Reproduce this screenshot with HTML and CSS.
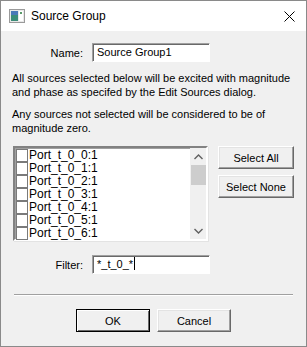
FILE: index.html
```html
<!DOCTYPE html>
<html>
<head>
    <title>Source Group</title>
    <meta charset="UTF-8">
    <link rel="stylesheet" href="styles.css">
</head>
<body>
    <div class="window">
        <div class="titlebar">
            <svg class="app-icon" width="16" height="14" viewBox="0 0 16 14">
                <rect x="0.5" y="0.5" width="15" height="13" fill="#e8e8e8" stroke="#9a9a9a"/>
                <rect x="2" y="2" width="7" height="10" fill="#3c8c78"/>
                <rect x="2" y="2" width="7" height="4" fill="#4a78b8"/>
                <rect x="10" y="2" width="4" height="10" fill="#ffffff"/>
                <rect x="11" y="3" width="2" height="2" fill="#5a9a6a"/>
            </svg>
            <span class="title">Source Group</span>
            <svg class="close" width="11" height="11" viewBox="0 0 11 11">
                <path d="M0.5 0.5 L10.5 10.5 M10.5 0.5 L0.5 10.5" stroke="#000" stroke-width="1"/>
            </svg>
        </div>
        <div class="client">
            <div class="field-row name-row">
                <label>Name:</label>
                <div class="edit">Source Group1</div>
            </div>
            <p class="info">All sources selected below will be excited with magnitude and phase as specifed by the Edit Sources dialog.</p>
            <p class="info second">Any sources not selected will be considered to be of magnitude zero.</p>
            <div class="list-row">
                <div class="listbox">
                    <ul class="items">
                        <li><span class="check"></span>Port_t_0_0:1</li>
                        <li><span class="check"></span>Port_t_0_1:1</li>
                        <li><span class="check"></span>Port_t_0_2:1</li>
                        <li><span class="check"></span>Port_t_0_3:1</li>
                        <li><span class="check"></span>Port_t_0_4:1</li>
                        <li><span class="check"></span>Port_t_0_5:1</li>
                        <li><span class="check"></span>Port_t_0_6:1</li>
                    </ul>
                    <div class="scrollbar">
                        <svg class="arrow" width="9" height="6" viewBox="0 0 9 6"><path d="M0.5 5 L4.5 1 L8.5 5" fill="none" stroke="#606060" stroke-width="1.4"/></svg>
                        <div class="thumb"></div>
                        <div class="track"></div>
                        <svg class="arrow" width="9" height="6" viewBox="0 0 9 6"><path d="M0.5 1 L4.5 5 L8.5 1" fill="none" stroke="#606060" stroke-width="1.4"/></svg>
                    </div>
                </div>
                <div class="side-buttons">
                    <button class="btn">Select All</button>
                    <button class="btn">Select None</button>
                </div>
            </div>
            <div class="field-row filter-row">
                <label>Filter:</label>
                <div class="edit">*_t_0_*<span class="caret"></span></div>
            </div>
            <hr class="separator">
            <div class="footer">
                <button class="btn default">OK</button>
                <button class="btn">Cancel</button>
            </div>
        </div>
    </div>
</body>
</html>
```

FILE: styles.css
```css
body { margin: 0; font-family: "Liberation Sans", Arial, sans-serif; font-size: 11px; color: #000; }
.window { width: 305px; height: 345px; border: 1px solid #8a8a8a; background: #f0f0f0; display: flex; flex-direction: column; }
.titlebar { height: 30px; background: #fff; display: flex; align-items: center; padding: 0 0 0 8px; }
.app-icon { margin-right: 6px; }
.title { font-size: 12px; flex: 1; }
.close { margin-right: 11px; }
.client { flex: 1; padding: 12px 0 0 11px; }
.field-row { display: flex; align-items: center; }
.field-row label { width: 71px; text-align: right; margin-right: 9px; }
.edit { width: 110px; height: 17px; line-height: 17px; padding: 0 2px 0 4px; background: #fff; border-style: solid; border-width: 1px; border-color: #a0a0a0 #fff #fff #a0a0a0; box-shadow: inset 1px 1px 0 #696969; font-size: 11px; }
.caret { display: inline-block; width: 1px; height: 13px; background: #000; vertical-align: -2px; margin-left: 1px; }
.info { margin: 9px 0 0; line-height: 14px; width: 285px; }
.info.second { margin-top: 8px; }
.list-row { display: flex; margin-top: 11px; }
.listbox { margin-left: 1px; width: 191px; height: 91px; display: flex; background: #fff; border-style: solid; border-width: 2px; border-color: #828282 #fff #fff #828282; box-shadow: inset 1px 1px 0 #a0a0a0, 1px 1px 0 #e3e3e3; }
.items { list-style: none; margin: 0; padding: 1px 0 0 1px; flex: 1; }
.items li { height: 13px; line-height: 13px; display: flex; align-items: center; font-size: 12px; }
.check { width: 10px; height: 11px; border: 1px solid #7a7a7a; background: #fff; margin-right: 1px; }
.scrollbar { width: 16px; background: #f0f0f0; display: flex; flex-direction: column; align-items: center; }
.arrow { margin: 6px 0 5px; }
.thumb { width: 15px; height: 20px; background: #cdcdcd; }
.track { flex: 1; }
.side-buttons { display: flex; flex-direction: column; gap: 6px; margin-left: 10px; }
.btn { font-family: "Liberation Sans", Arial, sans-serif; font-size: 11px; color: #000; background: #f0f0f0; padding: 0; border-style: solid; border-width: 1px; border-color: #fff #696969 #696969 #fff; box-shadow: inset -1px -1px 0 #a0a0a0, inset 1px 1px 0 #e3e3e3; }
.side-buttons .btn { width: 76px; height: 23px; }
.filter-row { margin-top: 14px; }
.separator { margin: 20px 13px 0 2px; border: 0; border-top: 1px solid #a0a0a0; border-bottom: 1px solid #fff; height: 0; }
.footer { display: flex; justify-content: center; gap: 7px; margin-top: 13px; padding-right: 11px; }
.footer .btn { width: 74px; height: 23px; }
.btn.default { border-color: #000; box-shadow: inset 1px 1px 0 #fff, inset -1px -1px 0 #696969; }
```
